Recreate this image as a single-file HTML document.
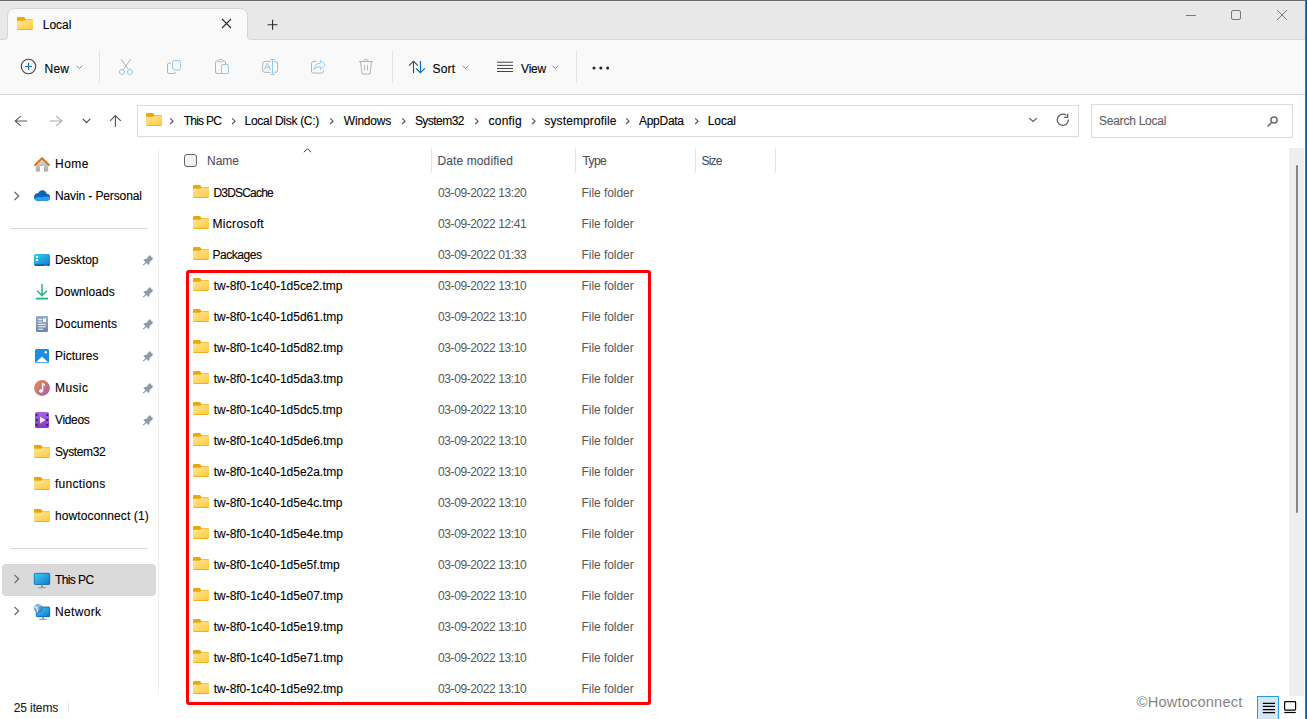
<!DOCTYPE html>
<html><head><meta charset="utf-8">
<style>
*{margin:0;padding:0;box-sizing:border-box}
html,body{width:1307px;height:719px;overflow:hidden;background:#fff}
body{position:relative;font-family:"Liberation Sans",sans-serif;font-size:12px;line-height:16px;color:#000;-webkit-text-stroke:0.1px currentColor}
.a{position:absolute}
.t{position:absolute;white-space:nowrap;font-size:12px;line-height:16px}
svg{position:absolute;overflow:visible}
#topline{left:0;top:0;width:1307px;height:1px;background:#676767}
#titlebar{left:0;top:1px;width:1305px;height:38px;background:#e8e8e8}
#toolbar{left:0;top:40px;width:1305px;height:55px;background:#f9f9f9;border-bottom:1px solid #d7d7d7}
#rborder2{left:1305px;top:0;width:1px;height:719px;background:#6f6a66}
.sep{position:absolute;width:1px;background:#dcdcdc}
.nav .t{left:55px}
.hdr{color:#4a4f63}
.date{color:#575757;-webkit-text-stroke:0}
.typ{color:#575757;-webkit-text-stroke:0}
</style></head><body>
<svg width="0" height="0" style="position:absolute">
<defs>
<linearGradient id="fg" x1="0" y1="0" x2="1" y2="1"><stop offset="0" stop-color="#ffe69a"/><stop offset="1" stop-color="#ffcb3d"/></linearGradient>
</defs></svg>
<div id="topline" class="a"></div>
<div id="titlebar" class="a"></div>
<div class="a" style="left:0;top:1px;width:1305px;height:1px;background:#efefef"></div>
<div id="toolbar" class="a"></div>
<div class="t" style="left:44.50px;top:61px;letter-spacing:0.250px">New</div>
<div class="t" style="left:432.50px;top:61px;letter-spacing:0.199px">Sort</div>
<div class="t" style="left:521.10px;top:61px;letter-spacing:-0.234px">View</div>


<!-- tab icons -->
<svg width="1305" height="41" style="left:0;top:0"><path d="M0 40V39.5H4.5A3 3 0 0 0 7.5 36.5V15.5A7 7 0 0 1 14.5 8.5H240.5A7 7 0 0 1 247.5 15.5V36.5A3 3 0 0 0 250.5 39.5H1305V40Z" fill="#f9f9f9"/><path d="M0 39.5H4.5A3 3 0 0 0 7.5 36.5V15.5A7 7 0 0 1 14.5 8.5H240.5A7 7 0 0 1 247.5 15.5V36.5A3 3 0 0 0 250.5 39.5H1305" fill="none" stroke="#d5d5d5" stroke-width="1"/></svg>
<div class="t" style="left:42.80px;top:17px;letter-spacing:-0.025px">Local</div>
<svg width="16" height="13" style="left:17px;top:17px"><path d="M1.4 0H6.4Q7 0 7.4 0.5L8.6 2H14.6Q16 2 16 3.4V11.6Q16 13 14.6 13H1.4Q0 13 0 11.6V1.4Q0 0 1.4 0Z" fill="#eba60a"/><path d="M0 4.6Q0 3.8 0.8 3.8H7L8.4 2.6H15.2Q16 2.6 16 3.4V11.2Q16 12.2 15 12.2H1Q0 12.2 0 11.2Z" fill="url(#fg)"/></svg>
<svg width="12" height="12" style="left:221px;top:18px"><path d="M1 1L10 10M10 1L1 10" stroke="#2b2b2b" stroke-width="1.1"/></svg>
<svg width="12" height="12" style="left:267px;top:19px"><path d="M0.6 5.7H10.6M5.6 0.7V10.7" stroke="#2b2b2b" stroke-width="1.1"/></svg>
<!-- window controls -->
<svg width="14" height="14" style="left:1183px;top:8px"><path d="M3 7.5H13" stroke="#7a7a7a" stroke-width="1"/></svg>
<svg width="14" height="14" style="left:1229px;top:8px"><rect x="2.5" y="2.5" width="9" height="9" rx="1.5" fill="none" stroke="#7a7a7a" stroke-width="1"/></svg>
<svg width="14" height="14" style="left:1275px;top:8px"><path d="M2 2L12 12M12 2L2 12" stroke="#7a7a7a" stroke-width="1"/></svg>
<!-- toolbar icons -->
<svg width="20" height="20" style="left:18px;top:56px"><circle cx="10.5" cy="10.5" r="7.2" fill="none" stroke="#444" stroke-width="1.1"/><path d="M7 10.5H14M10.5 7V14" stroke="#0a74d0" stroke-width="1.2"/></svg>
<svg width="10" height="8" style="left:75px;top:63px"><path d="M1.6 2.8L4.4 5.6L7.2 2.8" fill="none" stroke="#8a8a8a" stroke-width="1"/></svg>
<div class="sep" style="left:99px;top:51px;height:32px;background:#e3e3e3"></div>
<svg width="16" height="18" style="left:118px;top:58px"><path d="M3 1L10.3 11.3M12.8 1L5.5 11.3" stroke="#b4b4b4" stroke-width="1"/><circle cx="4" cy="14" r="2.6" fill="none" stroke="#99c8ee" stroke-width="1"/><circle cx="12" cy="14" r="2.6" fill="none" stroke="#99c8ee" stroke-width="1"/></svg>
<svg width="16" height="16" style="left:166px;top:59px"><path d="M5 4.2H3Q1.5 4.2 1.5 5.7V13Q1.5 14.5 3 14.5H8Q9.5 14.5 9.5 13" fill="none" stroke="#b4b4b4" stroke-width="1"/><rect x="6.5" y="1.5" width="8" height="9.5" rx="2" fill="none" stroke="#99c8ee" stroke-width="1"/></svg>
<svg width="16" height="18" style="left:214px;top:58px"><path d="M9.5 15.5H3Q1.5 15.5 1.5 14V4.5Q1.5 3 3 3H4.5M8.5 3H10Q11.5 3 11.5 4.5V6" fill="none" stroke="#b4b4b4" stroke-width="1"/><rect x="4.5" y="1.5" width="4" height="2.5" rx="1.2" fill="none" stroke="#b4b4b4" stroke-width="1"/><rect x="7.5" y="6.5" width="7" height="9" rx="1.5" fill="none" stroke="#99c8ee" stroke-width="1"/></svg>
<svg width="18" height="18" style="left:261px;top:58px"><path d="M9.7 3.4H4.1Q1.6 3.4 1.6 5.9V11.9Q1.6 14.4 4.1 14.4H9.7M13.2 3.4H14.1Q16.6 3.4 16.6 5.9V11.9Q16.6 14.4 14.1 14.4H13.2" fill="none" stroke="#b4b4b4" stroke-width="1"/><path d="M11.5 1.4V16.5M9.1 1.5H13.9M9.1 16.4H13.9" fill="none" stroke="#99c8ee" stroke-width="1"/><path d="M3.3 11.5L6.5 5.2L9.5 11.5M4.4 9.3H8.5" fill="none" stroke="#99c8ee" stroke-width="1"/></svg>
<svg width="18" height="18" style="left:310px;top:58px"><path d="M6.6 3.4H3.5Q1.5 3.4 1.5 5.4V13.1Q1.5 15.1 3.5 15.1H11.4Q13.4 15.1 13.4 13.1V12.4" fill="none" stroke="#b4b4b4" stroke-width="1"/><path d="M4.1 11.5Q5 5.2 10.4 5.2V2.3L15.4 6.9L10.4 11.5V8.6Q6 8.6 4.1 11.5Z" fill="none" stroke="#99c8ee" stroke-width="1" stroke-linejoin="round"/></svg>
<svg width="16" height="18" style="left:358px;top:58px"><path d="M1 3.5H15M2.5 3.5L4 16H12L13.5 3.5M6 3.5Q6 1.3 8 1.3Q10 1.3 10 3.5M6.5 7V12.5M9.5 7V12.5" fill="none" stroke="#b4b4b4" stroke-width="1"/></svg>
<div class="sep" style="left:392px;top:51px;height:32px;background:#e3e3e3"></div>
<svg width="18" height="16" style="left:408px;top:59px"><path d="M5.5 2V14M1 6.6L5.5 2.2L10 6.6" fill="none" stroke="#444" stroke-width="1.1"/><path d="M12.4 2V14M8 9.4L12.4 13.8L16.8 9.4" fill="none" stroke="#0067c0" stroke-width="1.1"/></svg>
<svg width="10" height="8" style="left:461px;top:63px"><path d="M1.6 2.8L4.4 5.6L7.2 2.8" fill="none" stroke="#8a8a8a" stroke-width="1"/></svg>
<svg width="18" height="14" style="left:496px;top:60px"><path d="M1 2.2H17M1 5.4H17M1 8.5H17M1 11.5H17" stroke="#444" stroke-width="1"/></svg>
<svg width="10" height="8" style="left:551px;top:63px"><path d="M1.6 2.8L4.4 5.6L7.2 2.8" fill="none" stroke="#8a8a8a" stroke-width="1"/></svg>
<div class="sep" style="left:576px;top:51px;height:32px;background:#e3e3e3"></div>
<svg width="20" height="6" style="left:591px;top:65px"><circle cx="3" cy="3" r="1.5" fill="#222"/><circle cx="9.8" cy="3" r="1.5" fill="#222"/><circle cx="16.6" cy="3" r="1.5" fill="#222"/></svg>
<!-- address row icons -->
<svg width="16" height="14" style="left:13px;top:114px"><path d="M2 7H14M7.8 2.1L2.2 7L7.8 11.9" fill="none" stroke="#5c5c5c" stroke-width="1.1"/></svg>
<svg width="16" height="14" style="left:49px;top:114px"><path d="M1 7H13M7.2 2.1L12.8 7L7.2 11.9" fill="none" stroke="#ababab" stroke-width="1.1"/></svg>
<svg width="10" height="8" style="left:82px;top:117px"><path d="M0.8 1.8L4.5 5.6L8.2 1.8" fill="none" stroke="#444" stroke-width="1.1"/></svg>
<svg width="14" height="16" style="left:109px;top:114px"><path d="M6.4 1.3V13M1.2 6.8L6.4 1.5L11.8 6.8" fill="none" stroke="#555" stroke-width="1.1"/></svg>
<svg width="16" height="13" style="left:146px;top:113px"><path d="M1.4 0H6.4Q7 0 7.4 0.5L8.6 2H14.6Q16 2 16 3.4V11.6Q16 13 14.6 13H1.4Q0 13 0 11.6V1.4Q0 0 1.4 0Z" fill="#eba60a"/><path d="M0 4.6Q0 3.8 0.8 3.8H7L8.4 2.6H15.2Q16 2.6 16 3.4V11.2Q16 12.2 15 12.2H1Q0 12.2 0 11.2Z" fill="url(#fg)"/></svg>
<svg width="12" height="12" style="left:1027px;top:115px"><path d="M2.2 3.2L6.1 6.5L9.8 3.2" fill="none" stroke="#555" stroke-width="1.1"/></svg>
<svg width="16" height="16" style="left:1055px;top:112px"><path d="M13.4 7.6A5.6 5.6 0 1 1 11.3 3.4" fill="none" stroke="#555" stroke-width="1.2"/><path d="M12.7 1.8V5.3H9.2" fill="none" stroke="#555" stroke-width="1.2"/></svg>
<svg width="16" height="16" style="left:1264px;top:113px"><circle cx="10" cy="7" r="3.1" fill="none" stroke="#6a6a6a" stroke-width="1.5"/><path d="M7.8 9.3L3.5 13.5" stroke="#6a6a6a" stroke-width="1.6"/></svg>

<!-- address -->
<div class="a" style="left:137px;top:105px;width:942px;height:32px;border:1px solid #dcdcdc"></div>
<div class="a" style="left:1091px;top:104px;width:202px;height:34px;border:1px solid #dcdcdc"></div>
<div class="t" style="left:183.70px;top:113px;letter-spacing:-0.749px">This PC</div>
<div class="t" style="left:244.60px;top:113px;letter-spacing:-0.285px">Local Disk (C:)</div>
<div class="t" style="left:343.80px;top:113px;letter-spacing:-0.200px">Windows</div>
<div class="t" style="left:414.90px;top:113px;letter-spacing:-0.530px">System32</div>
<div class="t" style="left:488.60px;top:113px;letter-spacing:0.200px">config</div>
<div class="t" style="left:544.30px;top:113px;letter-spacing:0.126px">systemprofile</div>
<div class="t" style="left:639.00px;top:113px;letter-spacing:-0.283px">AppData</div>
<div class="t" style="left:707.80px;top:113px;letter-spacing:-0.125px">Local</div>
<div class="t" style="left:1099.00px;top:113px;color:#5f5f5f;letter-spacing:-0.243px">Search Local</div>

<!-- nav -->
<div class="nav">
<div class="t" style="top:156px;letter-spacing:0.500px">Home</div>
<div class="t" style="top:188px;letter-spacing:-0.118px">Navin - Personal</div>
<div class="a" style="left:10px;top:228px;width:138px;height:1px;background:#d9d9d9"></div>
<div class="t" style="top:252px;letter-spacing:-0.083px">Desktop</div>
<div class="t" style="top:284px;letter-spacing:0.033px">Downloads</div>
<div class="t" style="top:316px;letter-spacing:0.158px">Documents</div>
<div class="t" style="top:348px;letter-spacing:0.017px">Pictures</div>
<div class="t" style="top:380px;letter-spacing:0.400px">Music</div>
<div class="t" style="top:412px;letter-spacing:-0.340px">Videos</div>
<div class="t" style="top:444px;letter-spacing:-0.387px">System32</div>
<div class="t" style="top:476px;letter-spacing:0.283px">functions</div>
<div class="t" style="top:508px;letter-spacing:0.108px">howtoconnect (1)</div>
<div class="a" style="left:10px;top:548px;width:138px;height:1px;background:#d9d9d9"></div>
<div class="a" style="left:2px;top:564px;width:154px;height:32px;background:#dadada;border-radius:4px"></div>
<div class="t" style="top:572px;letter-spacing:-0.602px">This PC</div>
<div class="t" style="top:604px;letter-spacing:0.333px">Network</div>
</div>
<div class="sep" style="left:158px;top:148px;height:547px;background:#f0f0f0"></div>

<!-- header -->
<div class="t hdr" style="left:207.10px;top:153px;letter-spacing:-0.036px">Name</div>
<div class="t hdr" style="left:437.50px;top:153px;letter-spacing:0.108px">Date modified</div>
<div class="t hdr" style="left:582.40px;top:153px;letter-spacing:-0.568px">Type</div>
<div class="t hdr" style="left:701.60px;top:153px;letter-spacing:-0.865px">Size</div>
<div class="sep" style="left:431px;top:148px;height:25px;background:#e5e5e5"></div>
<div class="sep" style="left:575px;top:148px;height:25px;background:#e5e5e5"></div>
<div class="sep" style="left:695px;top:148px;height:25px;background:#e5e5e5"></div>
<div class="sep" style="left:775px;top:148px;height:25px;background:#e5e5e5"></div>

<div id="rows">
<svg width="16" height="13" style="left:193px;top:185px"><path d="M1.4 0H6.4Q7 0 7.4 0.5L8.6 2H14.6Q16 2 16 3.4V11.6Q16 13 14.6 13H1.4Q0 13 0 11.6V1.4Q0 0 1.4 0Z" fill="#eba60a"/><path d="M0 4.6Q0 3.8 0.8 3.8H7L8.4 2.6H15.2Q16 2.6 16 3.4V11.2Q16 12.2 15 12.2H1Q0 12.2 0 11.2Z" fill="url(#fg)"/></svg>
<div class="t" style="left:213.40px;top:185px;letter-spacing:-0.800px">D3DSCache</div>
<div class="t date" style="left:438.00px;top:185px;letter-spacing:-0.400px">03-09-2022 13:20</div>
<div class="t typ" style="left:581.60px;top:185px;letter-spacing:-0.060px">File folder</div>
<svg width="16" height="13" style="left:193px;top:216px"><path d="M1.4 0H6.4Q7 0 7.4 0.5L8.6 2H14.6Q16 2 16 3.4V11.6Q16 13 14.6 13H1.4Q0 13 0 11.6V1.4Q0 0 1.4 0Z" fill="#eba60a"/><path d="M0 4.6Q0 3.8 0.8 3.8H7L8.4 2.6H15.2Q16 2.6 16 3.4V11.2Q16 12.2 15 12.2H1Q0 12.2 0 11.2Z" fill="url(#fg)"/></svg>
<div class="t" style="left:212.50px;top:216px;letter-spacing:0.308px">Microsoft</div>
<div class="t date" style="left:438.00px;top:216px;letter-spacing:-0.400px">03-09-2022 12:41</div>
<div class="t typ" style="left:581.60px;top:216px;letter-spacing:-0.060px">File folder</div>
<svg width="16" height="13" style="left:193px;top:247px"><path d="M1.4 0H6.4Q7 0 7.4 0.5L8.6 2H14.6Q16 2 16 3.4V11.6Q16 13 14.6 13H1.4Q0 13 0 11.6V1.4Q0 0 1.4 0Z" fill="#eba60a"/><path d="M0 4.6Q0 3.8 0.8 3.8H7L8.4 2.6H15.2Q16 2.6 16 3.4V11.2Q16 12.2 15 12.2H1Q0 12.2 0 11.2Z" fill="url(#fg)"/></svg>
<div class="t" style="left:212.50px;top:247px;letter-spacing:-0.471px">Packages</div>
<div class="t date" style="left:438.00px;top:247px;letter-spacing:-0.400px">03-09-2022 01:33</div>
<div class="t typ" style="left:581.60px;top:247px;letter-spacing:-0.060px">File folder</div>
<svg width="16" height="13" style="left:193px;top:278px"><path d="M1.4 0H6.4Q7 0 7.4 0.5L8.6 2H14.6Q16 2 16 3.4V11.6Q16 13 14.6 13H1.4Q0 13 0 11.6V1.4Q0 0 1.4 0Z" fill="#eba60a"/><path d="M0 4.6Q0 3.8 0.8 3.8H7L8.4 2.6H15.2Q16 2.6 16 3.4V11.2Q16 12.2 15 12.2H1Q0 12.2 0 11.2Z" fill="url(#fg)"/></svg>
<div class="t" style="left:213.80px;top:278px;letter-spacing:-0.042px">tw-8f0-1c40-1d5ce2.tmp</div>
<div class="t date" style="left:438.00px;top:278px;letter-spacing:-0.400px">03-09-2022 13:10</div>
<div class="t typ" style="left:581.60px;top:278px;letter-spacing:-0.060px">File folder</div>
<svg width="16" height="13" style="left:193px;top:309px"><path d="M1.4 0H6.4Q7 0 7.4 0.5L8.6 2H14.6Q16 2 16 3.4V11.6Q16 13 14.6 13H1.4Q0 13 0 11.6V1.4Q0 0 1.4 0Z" fill="#eba60a"/><path d="M0 4.6Q0 3.8 0.8 3.8H7L8.4 2.6H15.2Q16 2.6 16 3.4V11.2Q16 12.2 15 12.2H1Q0 12.2 0 11.2Z" fill="url(#fg)"/></svg>
<div class="t" style="left:213.80px;top:309px;letter-spacing:-0.042px">tw-8f0-1c40-1d5d61.tmp</div>
<div class="t date" style="left:438.00px;top:309px;letter-spacing:-0.400px">03-09-2022 13:10</div>
<div class="t typ" style="left:581.60px;top:309px;letter-spacing:-0.060px">File folder</div>
<svg width="16" height="13" style="left:193px;top:340px"><path d="M1.4 0H6.4Q7 0 7.4 0.5L8.6 2H14.6Q16 2 16 3.4V11.6Q16 13 14.6 13H1.4Q0 13 0 11.6V1.4Q0 0 1.4 0Z" fill="#eba60a"/><path d="M0 4.6Q0 3.8 0.8 3.8H7L8.4 2.6H15.2Q16 2.6 16 3.4V11.2Q16 12.2 15 12.2H1Q0 12.2 0 11.2Z" fill="url(#fg)"/></svg>
<div class="t" style="left:213.80px;top:340px;letter-spacing:-0.042px">tw-8f0-1c40-1d5d82.tmp</div>
<div class="t date" style="left:438.00px;top:340px;letter-spacing:-0.400px">03-09-2022 13:10</div>
<div class="t typ" style="left:581.60px;top:340px;letter-spacing:-0.060px">File folder</div>
<svg width="16" height="13" style="left:193px;top:371px"><path d="M1.4 0H6.4Q7 0 7.4 0.5L8.6 2H14.6Q16 2 16 3.4V11.6Q16 13 14.6 13H1.4Q0 13 0 11.6V1.4Q0 0 1.4 0Z" fill="#eba60a"/><path d="M0 4.6Q0 3.8 0.8 3.8H7L8.4 2.6H15.2Q16 2.6 16 3.4V11.2Q16 12.2 15 12.2H1Q0 12.2 0 11.2Z" fill="url(#fg)"/></svg>
<div class="t" style="left:213.80px;top:371px;letter-spacing:-0.042px">tw-8f0-1c40-1d5da3.tmp</div>
<div class="t date" style="left:438.00px;top:371px;letter-spacing:-0.400px">03-09-2022 13:10</div>
<div class="t typ" style="left:581.60px;top:371px;letter-spacing:-0.060px">File folder</div>
<svg width="16" height="13" style="left:193px;top:402px"><path d="M1.4 0H6.4Q7 0 7.4 0.5L8.6 2H14.6Q16 2 16 3.4V11.6Q16 13 14.6 13H1.4Q0 13 0 11.6V1.4Q0 0 1.4 0Z" fill="#eba60a"/><path d="M0 4.6Q0 3.8 0.8 3.8H7L8.4 2.6H15.2Q16 2.6 16 3.4V11.2Q16 12.2 15 12.2H1Q0 12.2 0 11.2Z" fill="url(#fg)"/></svg>
<div class="t" style="left:213.80px;top:402px;letter-spacing:-0.042px">tw-8f0-1c40-1d5dc5.tmp</div>
<div class="t date" style="left:438.00px;top:402px;letter-spacing:-0.400px">03-09-2022 13:10</div>
<div class="t typ" style="left:581.60px;top:402px;letter-spacing:-0.060px">File folder</div>
<svg width="16" height="13" style="left:193px;top:433px"><path d="M1.4 0H6.4Q7 0 7.4 0.5L8.6 2H14.6Q16 2 16 3.4V11.6Q16 13 14.6 13H1.4Q0 13 0 11.6V1.4Q0 0 1.4 0Z" fill="#eba60a"/><path d="M0 4.6Q0 3.8 0.8 3.8H7L8.4 2.6H15.2Q16 2.6 16 3.4V11.2Q16 12.2 15 12.2H1Q0 12.2 0 11.2Z" fill="url(#fg)"/></svg>
<div class="t" style="left:213.80px;top:433px;letter-spacing:-0.042px">tw-8f0-1c40-1d5de6.tmp</div>
<div class="t date" style="left:438.00px;top:433px;letter-spacing:-0.400px">03-09-2022 13:10</div>
<div class="t typ" style="left:581.60px;top:433px;letter-spacing:-0.060px">File folder</div>
<svg width="16" height="13" style="left:193px;top:464px"><path d="M1.4 0H6.4Q7 0 7.4 0.5L8.6 2H14.6Q16 2 16 3.4V11.6Q16 13 14.6 13H1.4Q0 13 0 11.6V1.4Q0 0 1.4 0Z" fill="#eba60a"/><path d="M0 4.6Q0 3.8 0.8 3.8H7L8.4 2.6H15.2Q16 2.6 16 3.4V11.2Q16 12.2 15 12.2H1Q0 12.2 0 11.2Z" fill="url(#fg)"/></svg>
<div class="t" style="left:213.80px;top:464px;letter-spacing:-0.042px">tw-8f0-1c40-1d5e2a.tmp</div>
<div class="t date" style="left:438.00px;top:464px;letter-spacing:-0.400px">03-09-2022 13:10</div>
<div class="t typ" style="left:581.60px;top:464px;letter-spacing:-0.060px">File folder</div>
<svg width="16" height="13" style="left:193px;top:495px"><path d="M1.4 0H6.4Q7 0 7.4 0.5L8.6 2H14.6Q16 2 16 3.4V11.6Q16 13 14.6 13H1.4Q0 13 0 11.6V1.4Q0 0 1.4 0Z" fill="#eba60a"/><path d="M0 4.6Q0 3.8 0.8 3.8H7L8.4 2.6H15.2Q16 2.6 16 3.4V11.2Q16 12.2 15 12.2H1Q0 12.2 0 11.2Z" fill="url(#fg)"/></svg>
<div class="t" style="left:213.80px;top:495px;letter-spacing:-0.042px">tw-8f0-1c40-1d5e4c.tmp</div>
<div class="t date" style="left:438.00px;top:495px;letter-spacing:-0.400px">03-09-2022 13:10</div>
<div class="t typ" style="left:581.60px;top:495px;letter-spacing:-0.060px">File folder</div>
<svg width="16" height="13" style="left:193px;top:526px"><path d="M1.4 0H6.4Q7 0 7.4 0.5L8.6 2H14.6Q16 2 16 3.4V11.6Q16 13 14.6 13H1.4Q0 13 0 11.6V1.4Q0 0 1.4 0Z" fill="#eba60a"/><path d="M0 4.6Q0 3.8 0.8 3.8H7L8.4 2.6H15.2Q16 2.6 16 3.4V11.2Q16 12.2 15 12.2H1Q0 12.2 0 11.2Z" fill="url(#fg)"/></svg>
<div class="t" style="left:213.80px;top:526px;letter-spacing:-0.042px">tw-8f0-1c40-1d5e4e.tmp</div>
<div class="t date" style="left:438.00px;top:526px;letter-spacing:-0.400px">03-09-2022 13:10</div>
<div class="t typ" style="left:581.60px;top:526px;letter-spacing:-0.060px">File folder</div>
<svg width="16" height="13" style="left:193px;top:557px"><path d="M1.4 0H6.4Q7 0 7.4 0.5L8.6 2H14.6Q16 2 16 3.4V11.6Q16 13 14.6 13H1.4Q0 13 0 11.6V1.4Q0 0 1.4 0Z" fill="#eba60a"/><path d="M0 4.6Q0 3.8 0.8 3.8H7L8.4 2.6H15.2Q16 2.6 16 3.4V11.2Q16 12.2 15 12.2H1Q0 12.2 0 11.2Z" fill="url(#fg)"/></svg>
<div class="t" style="left:213.80px;top:557px;letter-spacing:-0.042px">tw-8f0-1c40-1d5e5f.tmp</div>
<div class="t date" style="left:438.00px;top:557px;letter-spacing:-0.400px">03-09-2022 13:10</div>
<div class="t typ" style="left:581.60px;top:557px;letter-spacing:-0.060px">File folder</div>
<svg width="16" height="13" style="left:193px;top:588px"><path d="M1.4 0H6.4Q7 0 7.4 0.5L8.6 2H14.6Q16 2 16 3.4V11.6Q16 13 14.6 13H1.4Q0 13 0 11.6V1.4Q0 0 1.4 0Z" fill="#eba60a"/><path d="M0 4.6Q0 3.8 0.8 3.8H7L8.4 2.6H15.2Q16 2.6 16 3.4V11.2Q16 12.2 15 12.2H1Q0 12.2 0 11.2Z" fill="url(#fg)"/></svg>
<div class="t" style="left:213.80px;top:588px;letter-spacing:-0.042px">tw-8f0-1c40-1d5e07.tmp</div>
<div class="t date" style="left:438.00px;top:588px;letter-spacing:-0.400px">03-09-2022 13:10</div>
<div class="t typ" style="left:581.60px;top:588px;letter-spacing:-0.060px">File folder</div>
<svg width="16" height="13" style="left:193px;top:619px"><path d="M1.4 0H6.4Q7 0 7.4 0.5L8.6 2H14.6Q16 2 16 3.4V11.6Q16 13 14.6 13H1.4Q0 13 0 11.6V1.4Q0 0 1.4 0Z" fill="#eba60a"/><path d="M0 4.6Q0 3.8 0.8 3.8H7L8.4 2.6H15.2Q16 2.6 16 3.4V11.2Q16 12.2 15 12.2H1Q0 12.2 0 11.2Z" fill="url(#fg)"/></svg>
<div class="t" style="left:213.80px;top:619px;letter-spacing:-0.042px">tw-8f0-1c40-1d5e19.tmp</div>
<div class="t date" style="left:438.00px;top:619px;letter-spacing:-0.400px">03-09-2022 13:10</div>
<div class="t typ" style="left:581.60px;top:619px;letter-spacing:-0.060px">File folder</div>
<svg width="16" height="13" style="left:193px;top:650px"><path d="M1.4 0H6.4Q7 0 7.4 0.5L8.6 2H14.6Q16 2 16 3.4V11.6Q16 13 14.6 13H1.4Q0 13 0 11.6V1.4Q0 0 1.4 0Z" fill="#eba60a"/><path d="M0 4.6Q0 3.8 0.8 3.8H7L8.4 2.6H15.2Q16 2.6 16 3.4V11.2Q16 12.2 15 12.2H1Q0 12.2 0 11.2Z" fill="url(#fg)"/></svg>
<div class="t" style="left:213.80px;top:650px;letter-spacing:-0.042px">tw-8f0-1c40-1d5e71.tmp</div>
<div class="t date" style="left:438.00px;top:650px;letter-spacing:-0.400px">03-09-2022 13:10</div>
<div class="t typ" style="left:581.60px;top:650px;letter-spacing:-0.060px">File folder</div>
<svg width="16" height="13" style="left:193px;top:681px"><path d="M1.4 0H6.4Q7 0 7.4 0.5L8.6 2H14.6Q16 2 16 3.4V11.6Q16 13 14.6 13H1.4Q0 13 0 11.6V1.4Q0 0 1.4 0Z" fill="#eba60a"/><path d="M0 4.6Q0 3.8 0.8 3.8H7L8.4 2.6H15.2Q16 2.6 16 3.4V11.2Q16 12.2 15 12.2H1Q0 12.2 0 11.2Z" fill="url(#fg)"/></svg>
<div class="t" style="left:213.80px;top:681px;letter-spacing:-0.042px">tw-8f0-1c40-1d5e92.tmp</div>
<div class="t date" style="left:438.00px;top:681px;letter-spacing:-0.400px">03-09-2022 13:10</div>
<div class="t typ" style="left:581.60px;top:681px;letter-spacing:-0.060px">File folder</div>
</div><!--rows-->


<svg width="6" height="8" style="left:168.5px;top:117px"><path d="M1.2 1.4L4 4.2L1.2 7" fill="none" stroke="#555" stroke-width="1.2"/></svg>
<svg width="6" height="8" style="left:230.5px;top:117px"><path d="M1.2 1.4L4 4.2L1.2 7" fill="none" stroke="#555" stroke-width="1.2"/></svg>
<svg width="6" height="8" style="left:328.5px;top:117px"><path d="M1.2 1.4L4 4.2L1.2 7" fill="none" stroke="#555" stroke-width="1.2"/></svg>
<svg width="6" height="8" style="left:400.5px;top:117px"><path d="M1.2 1.4L4 4.2L1.2 7" fill="none" stroke="#555" stroke-width="1.2"/></svg>
<svg width="6" height="8" style="left:474px;top:117px"><path d="M1.2 1.4L4 4.2L1.2 7" fill="none" stroke="#555" stroke-width="1.2"/></svg>
<svg width="6" height="8" style="left:531px;top:117px"><path d="M1.2 1.4L4 4.2L1.2 7" fill="none" stroke="#555" stroke-width="1.2"/></svg>
<svg width="6" height="8" style="left:625px;top:117px"><path d="M1.2 1.4L4 4.2L1.2 7" fill="none" stroke="#555" stroke-width="1.2"/></svg>
<svg width="6" height="8" style="left:694px;top:117px"><path d="M1.2 1.4L4 4.2L1.2 7" fill="none" stroke="#555" stroke-width="1.2"/></svg>
<svg width="8" height="10" style="left:13px;top:191px"><path d="M1.6 1L5.6 5L1.6 9" fill="none" stroke="#6e6e6e" stroke-width="1.3"/></svg>
<svg width="8" height="10" style="left:13px;top:574px"><path d="M1.6 1L5.6 5L1.6 9" fill="none" stroke="#6e6e6e" stroke-width="1.3"/></svg>
<svg width="8" height="10" style="left:13px;top:606px"><path d="M1.6 1L5.6 5L1.6 9" fill="none" stroke="#6e6e6e" stroke-width="1.3"/></svg>
<!-- home -->
<svg width="16" height="16" style="left:34px;top:156px"><defs><linearGradient id="hg" x1="0" y1="0" x2="0" y2="1"><stop offset="0" stop-color="#dcdcdc"/><stop offset="1" stop-color="#a9a9a9"/></linearGradient></defs><path d="M1.8 8.6L8 3L14.2 8.6V14.6Q14.2 15.6 13.2 15.6H10V10H6V15.6H2.8Q1.8 15.6 1.8 14.6Z" fill="url(#hg)"/><path d="M0.9 9.1L8 2.2L15.1 9.1" fill="none" stroke="#e06c0a" stroke-width="1.9" stroke-linejoin="round" stroke-linecap="round"/></svg>
<!-- cloud -->
<svg width="17" height="12" style="left:34px;top:190px"><defs><clipPath id="cc"><circle cx="3.9" cy="7.1" r="3.8"/><circle cx="8.4" cy="4.6" r="4.3"/><circle cx="12.6" cy="7.3" r="3.5"/><rect x="3.9" y="7" width="8.8" height="3.8"/></clipPath></defs><g clip-path="url(#cc)"><rect x="0" y="0" width="17" height="12" fill="#0a64b8"/><path d="M0 8.6Q4 5.6 8.5 7.2Q12 5.8 17 7V12H0Z" fill="#2aa2e8"/></g></svg>
<!-- desktop -->
<svg width="16" height="12" style="left:34px;top:254px"><defs><linearGradient id="dg" x1="0" y1="0" x2="1" y2="1"><stop offset="0" stop-color="#34d0f0"/><stop offset="1" stop-color="#1478d6"/></linearGradient></defs><rect x="0" y="0" width="16" height="11.8" rx="1.5" fill="url(#dg)"/><rect x="2" y="2" width="2.1" height="1.9" fill="#fff"/><rect x="2" y="5.2" width="2.1" height="1.9" fill="#fff"/><path d="M0.3 10.4H10.8V11.8H1.5Q0.3 11.8 0.3 10.6Z" fill="#05457f"/><rect x="11.9" y="10.6" width="1.3" height="1.2" fill="#05457f"/><rect x="14" y="10.6" width="1.3" height="1.2" fill="#05457f"/></svg>
<!-- downloads -->
<svg width="14" height="17" style="left:35px;top:283px"><path d="M7 1V12.5M2.2 7.8L7 12.6L11.8 7.8" fill="none" stroke="#22b488" stroke-width="1.5"/><path d="M1 15.6H13" stroke="#22b488" stroke-width="1.8"/></svg>
<!-- documents -->
<svg width="12" height="16" style="left:36px;top:316px"><defs><linearGradient id="og" x1="0" y1="0" x2="0" y2="1"><stop offset="0" stop-color="#9aaec8"/><stop offset="1" stop-color="#6d86a8"/></linearGradient></defs><rect x="0" y="0" width="12" height="16" rx="1.3" fill="url(#og)"/><path d="M2.2 3.6H6M2.2 6H6M2.2 8.4H9.8M2.2 10.8H9.8M2.2 13.2H7" stroke="#fff" stroke-width="0.9"/><rect x="7" y="2.4" width="3" height="3.6" fill="#fff"/></svg>
<!-- pictures -->
<svg width="15" height="14" style="left:35px;top:349px"><rect x="0" y="0" width="14" height="14" rx="1.5" fill="#1c8ce0"/><path d="M1 13.2L7 7.5L13.2 13.2Z" fill="#fff"/><circle cx="10.8" cy="3.2" r="1.2" fill="#fff"/></svg>
<!-- music -->
<svg width="16" height="16" style="left:34px;top:380px"><defs><linearGradient id="mg" x1="0" y1="0" x2="1" y2="1"><stop offset="0" stop-color="#f08a4a"/><stop offset="1" stop-color="#a45ea8"/></linearGradient></defs><circle cx="8" cy="8" r="7.9" fill="url(#mg)"/><path d="M8.6 3.2V10.6" stroke="#fff" stroke-width="1.4"/><path d="M8.6 3.2Q10.5 4 10.8 6" fill="none" stroke="#fff" stroke-width="1.2"/><ellipse cx="7" cy="11" rx="2" ry="1.7" fill="#fff"/></svg>
<!-- videos -->
<svg width="15" height="16" style="left:35px;top:412px"><defs><linearGradient id="vg" x1="0" y1="0" x2="0" y2="1"><stop offset="0" stop-color="#a964e8"/><stop offset="1" stop-color="#8638c8"/></linearGradient></defs><rect x="0" y="0" width="14" height="16" rx="1.5" fill="url(#vg)"/><path d="M5 4.5L10.5 8L5 11.5Z" fill="#eee"/><rect x="0.8" y="2" width="1.8" height="1.8" fill="#3b1a5a"/><rect x="0.8" y="7" width="1.8" height="1.8" fill="#3b1a5a"/><rect x="0.8" y="12" width="1.8" height="1.8" fill="#3b1a5a"/><rect x="11.4" y="2" width="1.8" height="1.8" fill="#3b1a5a"/><rect x="11.4" y="7" width="1.8" height="1.8" fill="#3b1a5a"/><rect x="11.4" y="12" width="1.8" height="1.8" fill="#3b1a5a"/></svg>
<svg width="14" height="14" style="left:142px;top:254px"><g transform="translate(4.5 7.9) rotate(45)"><path d="M-2.6 -7H2.6L2.3 -2.2L3.6 -0.3V0.9H-3.6V-0.3L-2.3 -2.2Z" fill="#8f9ba4"/><path d="M0 0.8V4.6" stroke="#8f9ba4" stroke-width="1.3"/></g></svg>
<svg width="14" height="14" style="left:142px;top:286px"><g transform="translate(4.5 7.9) rotate(45)"><path d="M-2.6 -7H2.6L2.3 -2.2L3.6 -0.3V0.9H-3.6V-0.3L-2.3 -2.2Z" fill="#8f9ba4"/><path d="M0 0.8V4.6" stroke="#8f9ba4" stroke-width="1.3"/></g></svg>
<svg width="14" height="14" style="left:142px;top:318px"><g transform="translate(4.5 7.9) rotate(45)"><path d="M-2.6 -7H2.6L2.3 -2.2L3.6 -0.3V0.9H-3.6V-0.3L-2.3 -2.2Z" fill="#8f9ba4"/><path d="M0 0.8V4.6" stroke="#8f9ba4" stroke-width="1.3"/></g></svg>
<svg width="14" height="14" style="left:142px;top:350px"><g transform="translate(4.5 7.9) rotate(45)"><path d="M-2.6 -7H2.6L2.3 -2.2L3.6 -0.3V0.9H-3.6V-0.3L-2.3 -2.2Z" fill="#8f9ba4"/><path d="M0 0.8V4.6" stroke="#8f9ba4" stroke-width="1.3"/></g></svg>
<svg width="14" height="14" style="left:142px;top:382px"><g transform="translate(4.5 7.9) rotate(45)"><path d="M-2.6 -7H2.6L2.3 -2.2L3.6 -0.3V0.9H-3.6V-0.3L-2.3 -2.2Z" fill="#8f9ba4"/><path d="M0 0.8V4.6" stroke="#8f9ba4" stroke-width="1.3"/></g></svg>
<svg width="14" height="14" style="left:142px;top:414px"><g transform="translate(4.5 7.9) rotate(45)"><path d="M-2.6 -7H2.6L2.3 -2.2L3.6 -0.3V0.9H-3.6V-0.3L-2.3 -2.2Z" fill="#8f9ba4"/><path d="M0 0.8V4.6" stroke="#8f9ba4" stroke-width="1.3"/></g></svg>
<svg width="16" height="13" style="left:34px;top:445px"><path d="M1.4 0H6.4Q7 0 7.4 0.5L8.6 2H14.6Q16 2 16 3.4V11.6Q16 13 14.6 13H1.4Q0 13 0 11.6V1.4Q0 0 1.4 0Z" fill="#eba60a"/><path d="M0 4.6Q0 3.8 0.8 3.8H7L8.4 2.6H15.2Q16 2.6 16 3.4V11.2Q16 12.2 15 12.2H1Q0 12.2 0 11.2Z" fill="url(#fg)"/></svg>
<svg width="16" height="13" style="left:34px;top:477px"><path d="M1.4 0H6.4Q7 0 7.4 0.5L8.6 2H14.6Q16 2 16 3.4V11.6Q16 13 14.6 13H1.4Q0 13 0 11.6V1.4Q0 0 1.4 0Z" fill="#eba60a"/><path d="M0 4.6Q0 3.8 0.8 3.8H7L8.4 2.6H15.2Q16 2.6 16 3.4V11.2Q16 12.2 15 12.2H1Q0 12.2 0 11.2Z" fill="url(#fg)"/></svg>
<svg width="16" height="13" style="left:34px;top:509px"><path d="M1.4 0H6.4Q7 0 7.4 0.5L8.6 2H14.6Q16 2 16 3.4V11.6Q16 13 14.6 13H1.4Q0 13 0 11.6V1.4Q0 0 1.4 0Z" fill="#eba60a"/><path d="M0 4.6Q0 3.8 0.8 3.8H7L8.4 2.6H15.2Q16 2.6 16 3.4V11.2Q16 12.2 15 12.2H1Q0 12.2 0 11.2Z" fill="url(#fg)"/></svg>
<!-- this pc -->
<svg width="16" height="16" style="left:34px;top:573px"><defs><linearGradient id="pg" x1="0" y1="0" x2="1" y2="1"><stop offset="0" stop-color="#3cd2f2"/><stop offset="1" stop-color="#1274cc"/></linearGradient></defs><rect x="0" y="0" width="16" height="11.8" rx="1.3" fill="url(#pg)"/><rect x="0.3" y="0.3" width="15.4" height="11.2" rx="1.2" fill="none" stroke="#0d5ea8" stroke-width="0.7"/><rect x="7" y="11.8" width="2" height="2.2" fill="#9a9a9a"/><rect x="4.2" y="14" width="7.6" height="1.2" fill="#9a9a9a"/></svg>
<!-- network -->
<svg width="17" height="17" style="left:33px;top:603px"><rect x="3" y="3.8" width="14" height="10.2" rx="1.2" fill="url(#pg)"/><rect x="3.3" y="4.1" width="13.4" height="9.6" rx="1.1" fill="none" stroke="#0d5ea8" stroke-width="0.7"/><rect x="9" y="14" width="2" height="1.8" fill="#9a9a9a"/><rect x="6.2" y="15.8" width="7.6" height="1.1" fill="#9a9a9a"/><defs><radialGradient id="gl" cx="0.35" cy="0.35" r="0.7"><stop offset="0" stop-color="#9fd0f6"/><stop offset="1" stop-color="#2a6fc0"/></radialGradient></defs><circle cx="5.3" cy="5.3" r="4.3" fill="url(#gl)"/><path d="M1.6 4Q3.2 3.6 3.8 5Q3.4 6.6 4.6 7.6Q4.2 8.8 3.6 9" fill="none" stroke="#e6f3fd" stroke-width="1.3"/><path d="M5.6 1.2Q6.6 2.4 8.2 2.4" fill="none" stroke="#e6f3fd" stroke-width="1"/></svg>
<!-- header -->
<div class="a" style="left:184px;top:154px;width:13px;height:13px;border:1px solid #636363;border-radius:3px;background:#f3f3f3"></div>
<svg width="10" height="7" style="left:303px;top:147px"><path d="M1 5.2L4.5 1.7L8 5.2" fill="none" stroke="#3a3a3a" stroke-width="1"/></svg>
<!-- status icons -->
<div class="a" style="left:1257px;top:696px;width:22px;height:23px;background:#d4e7f6;border:1px solid #2b9be0;border-bottom:none"></div>
<svg width="16" height="14" style="left:1261px;top:700px"><path d="M1.8 3.4H14M1.8 6.4H14M1.8 9.6H14M1.8 12.6H14" stroke="#000" stroke-width="1.2"/></svg>
<svg width="14" height="15" style="left:1283px;top:700px"><rect x="1.6" y="1.6" width="11" height="8.5" rx="0.8" fill="none" stroke="#000" stroke-width="1.2"/><path d="M1.3 12.5H12.8" stroke="#000" stroke-width="1.2"/></svg>
<div class="t" style="left:1136.80px;top:693px;font-size:14.6px;line-height:18px;color:#858585;-webkit-text-stroke:0;letter-spacing:0.184px">©Howtoconnect</div>

<!-- red box -->
<div class="a" style="left:186px;top:270px;width:465px;height:435px;border:3px solid #ff0000;border-radius:3px"></div>

<!-- status -->
<div class="t" style="left:13.80px;top:700px;color:#1a1a1a;letter-spacing:-0.126px">25 items</div>
<div class="sep" style="left:68px;top:702px;height:11px;background:#ececec"></div>

<!-- scrollbar -->
<div class="a" style="left:1289px;top:148px;width:15px;height:548px;background:#eeeeee"></div>
<div class="a" style="left:1296px;top:165px;width:2px;height:348px;background:#868686;border-radius:1px"></div>

<div id="rborder2" class="a"></div>
<div class="a" style="left:1306px;top:0;width:1px;height:719px;background:#0a5aa8"></div>
</body></html>
